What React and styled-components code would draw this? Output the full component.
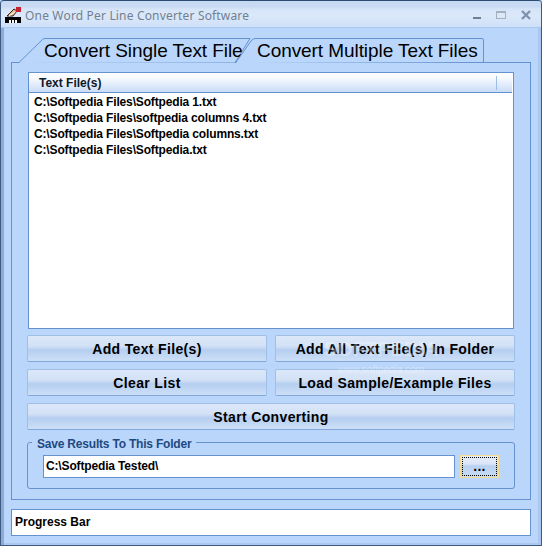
import React from "react";
import styled, { createGlobalStyle } from "styled-components";

const Global = createGlobalStyle`
  html, body { margin: 0; padding: 0; background: #bad6fb; }
  * { box-sizing: border-box; }
`;

const Win = styled.div`
  position: relative;
  width: 542px;
  height: 546px;
  display: flex;
  flex-direction: column;
  background: #bad6fb;
  border: 1px solid #3f5a80;
  border-top-color: #2e4a70;
  border-radius: 4px 4px 0 0;
  box-shadow: inset 3px 0 0 #8cabd8, inset -3px 0 0 #a9c7ef, inset 0 -2px 0 #a9c7ef;
  font-family: "Liberation Sans", Arial, sans-serif;
  color: #000;
  overflow: hidden;
`;

const TitleBar = styled.div`
  flex: none;
  height: 27px;
  display: flex;
  align-items: center;
  gap: 3px;
  padding: 2px 10px 0 4px;
  background: linear-gradient(#c6d9f2 0, #c9dbf3 6px, #d6e4f8 8px, #dbe8fa 14px, #cfe0f7 26px);
  border-bottom: 1px solid #a9c8ef;
`;

const TitleText = styled.span`
  flex: 1;
  font: 12px "Noto Sans", sans-serif;
  color: #72808f;
  letter-spacing: 0.17px;
`;

const WinBtns = styled.div`
  display: flex;
  align-items: center;
  gap: 15px;
`;

const Body = styled.div`
  flex: 1;
  display: flex;
  flex-direction: column;
  padding: 10px 10px 9px 10px;
`;

const TabStrip = styled.div`
  flex: none;
  height: 25px;
  display: flex;
  padding-left: 7px;
  position: relative;
  z-index: 1;
  margin-bottom: -1px;
`;

const Tab = styled.div`
  position: relative;
  flex: none;
  width: ${p => p.$w}px;
  height: 25px;
  margin-left: ${p => p.$ml || 0}px;
  padding-left: ${p => p.$pl}px;
  font-size: 19px;
  line-height: 26px;
  letter-spacing: -0.07px;
  white-space: nowrap;
  z-index: ${p => (p.$active ? 2 : 1)};
  & > svg { position: absolute; left: 0; top: 0; }
  & > span { position: relative; }
`;

const Panel = styled.div`
  flex: none;
  height: 438px;
  display: flex;
  flex-direction: column;
  border: 1px solid #6691cf;
  padding: 9px 15px 0 15px;
  width: 520px;
`;

const List = styled.div`
  flex: none;
  height: 257px;
  width: 486px;
  margin-left: 1px;
  display: flex;
  flex-direction: column;
  background: #fff;
  border: 1px solid #6691cf;
`;

const ListHead = styled.div`
  flex: none;
  height: 20px;
  display: flex;
  align-items: center;
  margin-right: 1px;
  padding: 1px 15px 0 10px;
  font-size: 12px;
  font-weight: bold;
  background: linear-gradient(#ffffff 0, #f4f8fe 6px, #c9dcf7 19px);
  border-bottom: 1px solid #6691cf;
  color: #101828;
`;

const HeadCell = styled.span`
  flex: 1;
`;

const HeadSep = styled.span`
  width: 1px;
  height: 14px;
  background: #9dbde9;
`;

const Rows = styled.div`
  padding: 1px 0 0 5px;
`;

const Row = styled.div`
  height: 16px;
  font-size: 12px;
  line-height: 16px;
  font-weight: bold;
  letter-spacing: -0.15px;
  white-space: nowrap;
`;

const BtnGrid = styled.div`
  flex: none;
  margin-top: 6px;
  display: grid;
  grid-template-columns: 240px 240px;
  column-gap: 8px;
  row-gap: 7px;
`;

const Btn = styled.button`
  grid-column: ${p => (p.$wide ? "1 / span 2" : "auto")};
  height: 27px;
  padding: 0;
  border: 1px solid #a0bfe6;
  border-bottom-color: #82a7da;
  border-radius: 2px;
  background: linear-gradient(#dce8f9 0, #d3e1f6 10px, #b5cff0 14px, #c0d6f3 19px, #d2e3f9 27px);
  font: bold 14px "Liberation Sans", Arial, sans-serif;
  letter-spacing: 0.35px;
  color: #000;
`;

const Group = styled.fieldset`
  flex: none;
  margin: 3px 0 0 0;
  padding: 4px 15px 0 15px;
  width: 488px;
  height: 56px;
  border: 1px solid #6691cf;
  border-radius: 3px;
  display: flex;
`;

const Legend = styled.legend`
  margin-left: -11px;
  padding: 4px 5px 0;
  font-size: 12px;
  font-weight: bold;
  line-height: 14px;
  letter-spacing: -0.2px;
  color: #1f4a80;
`;

const GroupRow = styled.div`
  display: flex;
  gap: 5px;
  width: 100%;
  height: 23px;
`;

const PathInput = styled.div`
  width: 412px;
  height: 23px;
  background: #fff;
  border: 1px solid #6691cf;
  padding-left: 2px;
  font-size: 12px;
  font-weight: bold;
  line-height: 21px;
  letter-spacing: -0.15px;
  color: #000;
`;

const Browse = styled.button`
  position: relative;
  width: 39px;
  height: 23px;
  padding: 0 0 2px;
  border: 1px solid #f5dc8c;
  background: linear-gradient(#e4edfa 0, #dbe6f8 8px, #b9d1f1 10px, #c9dcf5 22px);
  outline: 1px dotted #000;
  outline-offset: -3px;
  font: bold 14px/16px "Liberation Sans", Arial, sans-serif;
  color: #000;
  letter-spacing: 0.2px;
`;

const Progress = styled.div`
  flex: none;
  width: 520px;
  height: 27px;
  margin-top: 9px;
  background: #fff;
  border: 1px solid #6691cf;
  padding-left: 3px;
  font-size: 12px;
  font-weight: bold;
  line-height: 25px;
`;

const Watermark = styled.div`
  position: absolute;
  left: 305px;
  top: 333px;
  width: 150px;
  text-align: center;
  color: #fff;
  opacity: 0.3;
  pointer-events: none;
`;

const WmBig = styled.div`
  font: bold 20px/30px "Liberation Sans", sans-serif;
`;

const WmSmall = styled.div`
  font: 10px/12px "Liberation Sans", sans-serif;
`;

const AppIcon = () => (
  <svg width="17" height="17" viewBox="0 0 17 17">
    <rect x="0" y="10" width="16" height="6" fill="#000" />
    <rect x="4" y="13" width="2" height="3" fill="#fff" />
    <rect x="7" y="13" width="2" height="3" fill="#fff" />
    <rect x="10" y="13" width="2" height="3" fill="#fff" />
    <path d="M2 9 L9 2 L12 4 L8 9 Z" fill="#e8b888" stroke="#30201a" strokeWidth="1" />
    <path d="M4 9 L10 5" stroke="#fff" strokeWidth="1" />
    <rect x="11" y="0" width="5" height="5" fill="#c8202c" />
  </svg>
);

const MinIcon = () => (
  <svg width="8" height="10" viewBox="0 0 8 10"><rect y="7" width="8" height="2" fill="#6f7f95" /></svg>
);
const MaxIcon = () => (
  <svg width="10" height="10" viewBox="0 0 10 10">
    <rect x="0.5" y="1.5" width="9" height="7" fill="#dde8f7" stroke="#a4b0c0" />
    <rect x="0" y="1" width="10" height="2" fill="#a4b0c0" />
  </svg>
);
const CloseIcon = () => (
  <svg width="10" height="10" viewBox="0 0 10 10">
    <path d="M1 1 L9 9 M9 1 L1 9" stroke="#7f92ae" strokeWidth="2.4" />
  </svg>
);

const tab1 = "M0.5 25 L25 1 Q25.5 0.5 27 0.5 L232 0.5 L217 24.5";
const tab2 = "M0.5 25 L16 3 Q18 0.5 20 0.5 L247 0.5 Q248.5 0.5 248.5 2 L248.5 24";

const files = [
  "C:\\Softpedia Files\\Softpedia 1.txt",
  "C:\\Softpedia Files\\softpedia columns 4.txt",
  "C:\\Softpedia Files\\Softpedia columns.txt",
  "C:\\Softpedia Files\\Softpedia.txt",
];

export default function App() {
  return (
    <>
      <Global />
      <Win>
        <TitleBar>
          <AppIcon />
          <TitleText>One Word Per Line Converter Software</TitleText>
          <WinBtns>
            <MinIcon />
            <MaxIcon />
            <CloseIcon />
          </WinBtns>
        </TitleBar>
        <Body>
          <TabStrip>
            <Tab $w={233} $pl={26}>
              <svg width="233" height="25"><path d={tab1} fill="#bad6fb" stroke="#6691cf" /></svg>
              <span>Convert Single Text File</span>
            </Tab>
            <Tab $active $w={249} $ml={-16} $pl={22}>
              <svg width="249" height="25"><path d={tab2} fill="#bad6fb" stroke="#6691cf" /></svg>
              <span>Convert Multiple Text Files</span>
            </Tab>
          </TabStrip>
          <Panel>
            <List>
              <ListHead>
                <HeadCell>Text File(s)</HeadCell>
                <HeadSep />
              </ListHead>
              <Rows>
                {files.map(f => <Row key={f}>{f}</Row>)}
              </Rows>
            </List>
            <BtnGrid>
              <Btn>Add Text File(s)</Btn>
              <Btn>Add All Text File(s) In Folder</Btn>
              <Btn>Clear List</Btn>
              <Btn>Load Sample/Example Files</Btn>
              <Btn $wide>Start Converting</Btn>
            </BtnGrid>
            <Group>
              <Legend>Save Results To This Folder</Legend>
              <GroupRow>
                <PathInput>C:\Softpedia Tested\</PathInput>
                <Browse>...</Browse>
              </GroupRow>
            </Group>
          </Panel>
          <Progress>Progress Bar</Progress>
        </Body>
        <Watermark>
          <WmBig>SOFTPEDIA</WmBig>
          <WmSmall>www.softpedia.com</WmSmall>
        </Watermark>
      </Win>
    </>
  );
}
